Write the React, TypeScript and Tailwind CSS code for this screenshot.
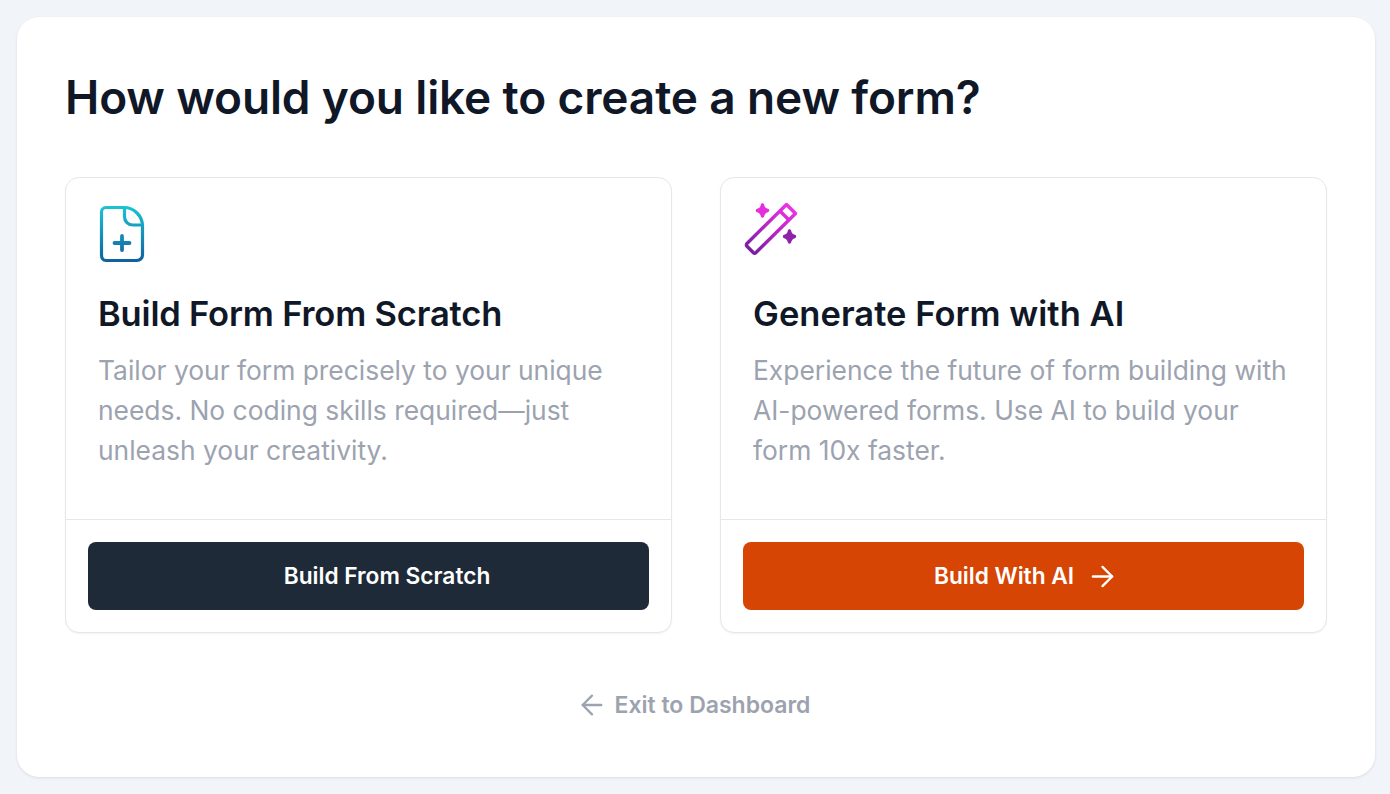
import React from 'react';
import { ArrowLeft, ArrowRight } from 'lucide-react';

const font = 'font-["Inter","Noto_Sans",sans-serif]';

const FileIcon = () => (
  <svg width="46" height="58" viewBox="0 0 46 58" fill="none" className="block">
    <defs>
      <linearGradient id="fileGrad" x1="0" y1="1" x2="0" y2="57" gradientUnits="userSpaceOnUse">
        <stop offset="0" stopColor="#1cc4d4" />
        <stop offset="1" stopColor="#0f5f9e" />
      </linearGradient>
    </defs>
    <path
      d="M7 2.500H25C35 2.500 43.500 11 43.500 21V50C43.500 53 41 55.500 38 55.500H7C4 55.500 2.500 53 2.500 50V7C2.500 4.500 4.500 2.500 7 2.500Z"
      stroke="url(#fileGrad)"
      strokeWidth="3.200"
    />
    <path
      d="M25.500 3V11.500C25.500 16.500 29 20 34 20H43"
      stroke="url(#fileGrad)"
      strokeWidth="3.200"
    />
    <path d="M23 31V45M15.500 38H30.500" stroke="url(#fileGrad)" strokeWidth="3.800" strokeLinecap="round" />
  </svg>
);

const WandIcon = () => (
  <svg width="54" height="54" viewBox="0 0 54 54" fill="none" className="block">
    <defs>
      <linearGradient id="wandGrad" x1="40" y1="2" x2="10" y2="52" gradientUnits="userSpaceOnUse">
        <stop offset="0" stopColor="#ee2fe6" />
        <stop offset="1" stopColor="#7a1ea1" />
      </linearGradient>
    </defs>
    <path
      d="M42.500 2.500L51.500 11.500L12 50.500C11.200 51.300 10 51.300 9.200 50.500L3 44.300C2.200 43.500 2.200 42.300 3 41.500L42.500 2.500Z"
      stroke="url(#wandGrad)"
      strokeWidth="3.400"
      strokeLinejoin="round"
    />
    <path d="M36 9L44.500 17.500" stroke="url(#wandGrad)" strokeWidth="3.400" />
    <path
      d="M18.500 3C19 6 20 7.500 23.500 8.500C20 9.500 19 11 18.500 14C18 11 17 9.500 13.500 8.500C17 7.500 18 6 18.500 3Z"
      fill="#e52fdc"
      stroke="#e52fdc"
      strokeWidth="3.400"
      strokeLinejoin="round"
    />
    <path
      d="M45.500 29C46 32 47 33.500 50.500 34.500C47 35.500 46 37 45.500 40C45 37 44 35.500 40.500 34.500C44 33.500 45 32 45.500 29Z"
      fill="#8f22ab"
      stroke="#8f22ab"
      strokeWidth="3.400"
      strokeLinejoin="round"
    />
  </svg>
);

interface OptionCardProps {
  icon: React.ReactNode;
  iconClass: string;
  title: string;
  titleClass: string;
  lines: string[];
  button: React.ReactNode;
  buttonClass: string;
}

const OptionCard: React.FC<OptionCardProps> = ({ icon, iconClass, title, titleClass, lines, button, buttonClass }) => (
  <div className="flex-1 h-[456px] bg-white rounded-[14px] border border-[#e5e7eb] shadow-[0_1px_2px_rgba(16,24,40,0.05)] flex flex-col">
    <div className="flex-1 px-[32px]">
      <div className={iconClass}>{icon}</div>
      <h2 className={`text-[34.5px] leading-[40px] font-semibold text-[#101828] ${titleClass}`}>{title}</h2>
      <p className="mt-[16px] text-[26.4px] leading-[40px] text-[#9ca3af]">
        {lines.map(l => (
          <span key={l} className="block whitespace-nowrap">{l}</span>
        ))}
      </p>
    </div>
    <div className="border-t border-[#e5e7eb] px-[22px] pt-[22px] pb-[22px]">
      <button className={`w-full h-[68px] rounded-[8px] flex items-center justify-center gap-[18px] text-white font-semibold text-[22.7px] ${buttonClass}`}>
        {button}
      </button>
    </div>
  </div>
);

export default function App() {
  return (
    <div className={`w-full h-[794px] bg-[#f1f4f9] pl-[17px] pr-[15px] pt-[17px] ${font}`}>
      <div className="h-[760px] bg-white rounded-[22px] shadow-[0_1px_3px_rgba(16,24,40,0.1)] px-[48px] pt-[48px]">
        <h1 className="text-[46px] leading-[64px] font-semibold text-[#101828] tracking-[-0.003em]">How would you like to create a new form?</h1>
        <div className="flex gap-[48px] mt-[48px]">
          <OptionCard
            icon={<FileIcon />}
            iconClass="pt-[27px] pb-[31px] pl-[1px]"
            title="Build Form From Scratch"
            titleClass="tracking-[-0.005em]"
            lines={['Tailor your form precisely to your unique', 'needs. No coding skills required—just', 'unleash your creativity.']}
            button="Build From Scratch"
            buttonClass="bg-[#1e2a38] pl-[37px]"
          />
          <OptionCard
            icon={<WandIcon />}
            iconClass="pt-[24px] pb-[38px] -ml-[9px]"
            title="Generate Form with AI"
            titleClass="tracking-[0.001em]"
            lines={['Experience the future of form building with', 'AI-powered forms. Use AI to build your', 'form 10x faster.']}
            button={<>Build With AI <ArrowRight size={33} strokeWidth={1.7} className="-mx-[6px]" /></>}
            buttonClass="bg-[#d64504]"
          />
        </div>
        <div className="mt-[52px] flex items-center justify-center gap-[13px] text-[#9ca3af] text-[23px] leading-[40px] font-semibold">
          <ArrowLeft size={32} strokeWidth={1.7} className="-mx-[6px]" />
          Exit to Dashboard
        </div>
      </div>
    </div>
  );
}
